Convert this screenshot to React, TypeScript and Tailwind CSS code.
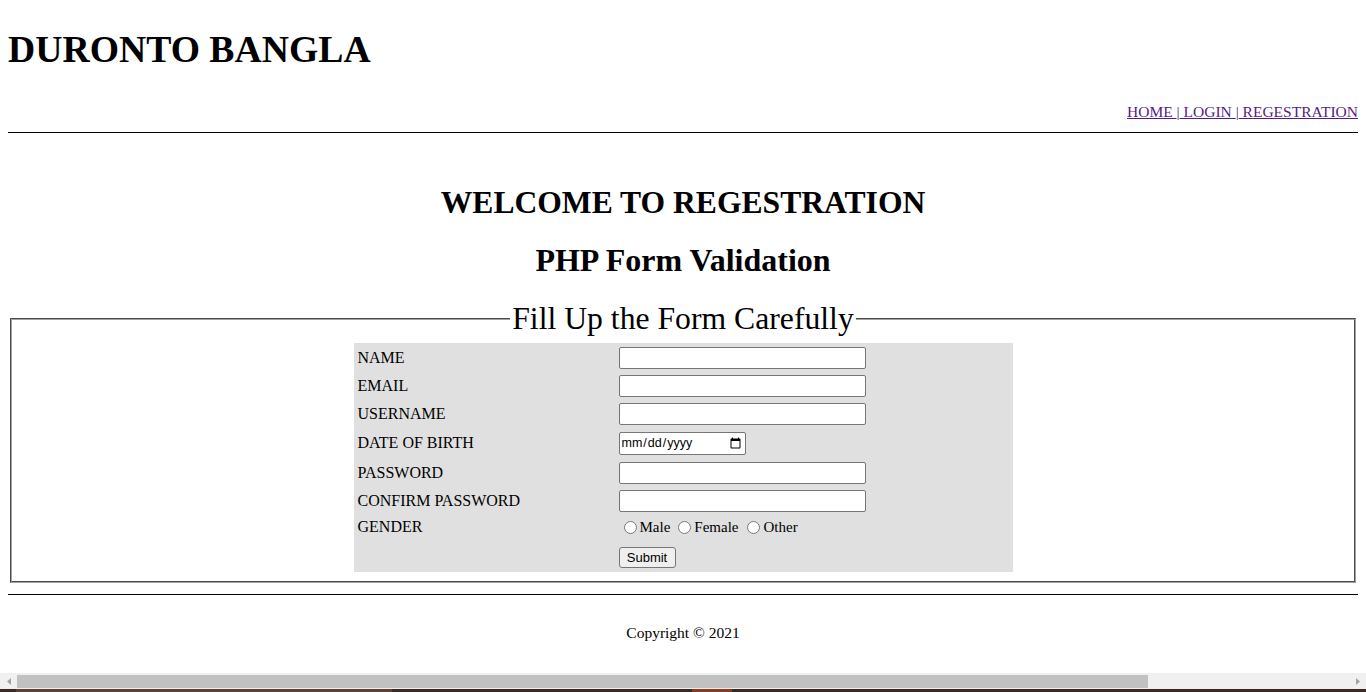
import React from "react";

const serif = "font-['Liberation_Serif','Times_New_Roman',serif]";

function TextRow({ label, type = "text" }: { label: string; type?: string }) {
  return (
    <>
      <div className="flex items-center p-[2px] pb-[3px] text-[16px] leading-[18px]">{label}</div>
      <div className="flex items-center p-[2px]">
        <input
          type={type}
          className="h-[22px] w-[247px] rounded-[2px] border border-[#767676] bg-white px-[2px] font-['Liberation_Sans',Arial,sans-serif] text-[13px]"
        />
      </div>
    </>
  );
}

export default function App() {
  return (
    <div className={`${serif} min-h-[692px] bg-white text-black`}>
      <div className="px-[8px]">
        <h1 className="mt-[28px] text-[37.7px] font-bold leading-[42px]">DURONTO BANGLA</h1>
        <div className="mt-[33px] text-right text-[15.5px] leading-[18px] text-[#551a8b]">
          <a href="#" className="underline">HOME </a>|<a href="#" className="underline"> LOGIN </a>|
          <a href="#" className="underline"> REGESTRATION</a>
        </div>
        <hr className="mt-[11px] border-0 border-t border-black" />
        <h2 className="mt-[52px] text-center text-[31.6px] font-bold leading-[36px]">WELCOME TO REGESTRATION</h2>
        <h2 className="mt-[21px] text-center text-[32px] font-bold leading-[36px]">PHP Form Validation</h2>
        <fieldset className="mx-[2px] mt-[22px] border-2 border-[#a0a0a0] [border-style:groove] px-[12px] pb-[9px] pt-[6px]">
          <legend className="mx-auto px-[2px] text-[31.7px] leading-[37px]">Fill Up the Form Carefully</legend>
          <div className="mx-auto grid w-[659px] grid-cols-[259px_394px] gap-[2px] bg-[#e0e0e0] p-[2px]">
            <TextRow label="NAME" />
            <TextRow label="EMAIL" type="email" />
            <TextRow label="USERNAME" />
            <div className="flex h-[29px] items-center p-[2px] pb-[4px] text-[16px] leading-[18px]">DATE OF BIRTH</div>
            <div className="flex h-[29px] items-center p-[2px]">
              <input
                type="date"
                className="h-[23px] w-[127px] rounded-[2px] border border-[#767676] bg-white px-[1px] font-['Liberation_Sans',Arial,sans-serif] text-[12.5px]"
              />
            </div>
            <TextRow label="PASSWORD" type="password" />
            <TextRow label="CONFIRM PASSWORD" type="password" />
            <div className="flex h-[27px] items-start px-[2px] pt-[2px] text-[16px] leading-[18px]">GENDER</div>
            <div className="flex h-[27px] items-start px-[2px] pt-[2px] text-[15px] leading-[18px]">
              <label className="flex items-center">
                <input type="radio" name="g" className="ml-[5px] mr-[3px] h-[13px] w-[13px]" />
                <span>Male</span>
              </label>
              <label className="flex items-center">
                <input type="radio" name="g" className="ml-[8px] mr-[3px] h-[13px] w-[13px]" />
                <span>Female</span>
              </label>
              <label className="flex items-center">
                <input type="radio" name="g" className="ml-[9px] mr-[3px] h-[13px] w-[13px]" />
                <span>Other</span>
              </label>
            </div>
            <div className="p-[2px]"></div>
            <div className="flex items-center p-[2px]">
              <button className="h-[21px] w-[57px] rounded-[3px] border border-[#767676] bg-[#efefef] px-[6px] font-['Liberation_Sans',Arial,sans-serif] text-[13px] leading-[15px]">
                Submit
              </button>
            </div>
          </div>
        </fieldset>
        <hr className="mt-[11px] border-0 border-t border-black" />
        <p className="mt-[29px] text-center text-[15.5px] leading-[18px]">Copyright © 2021</p>
      </div>

      {/* horizontal scrollbar of the captured window */}
      <div className="fixed bottom-[3px] left-0 right-0 flex h-[16px] items-center bg-[#f0f0f0]">
        <div className="flex w-[17px] items-center justify-center">
          <svg width="4" height="7" viewBox="0 0 4 7">
            <path d="M4 0 L0 3.5 L4 7 Z" fill="#a3a3a3" />
          </svg>
        </div>
        <div className="h-[13px] w-[1131px] bg-[#c1c1c1]"></div>
        <div className="flex-1"></div>
        <div className="flex w-[17px] items-center justify-center">
          <svg width="4" height="7" viewBox="0 0 4 7">
            <path d="M0 0 L4 3.5 L0 7 Z" fill="#a3a3a3" />
          </svg>
        </div>
      </div>
      <div className="fixed bottom-0 left-0 right-0 flex h-[3px]">
        <div className="w-[16px] bg-[#3a2a26]"></div>
        <div className="w-[376px] bg-[#5a3f37]"></div>
        <div className="w-[300px] bg-[#3a2a26]"></div>
        <div className="w-[40px] bg-[#8a3a20]"></div>
        <div className="flex-1 bg-[#3a2a26]"></div>
      </div>
    </div>
  );
}
